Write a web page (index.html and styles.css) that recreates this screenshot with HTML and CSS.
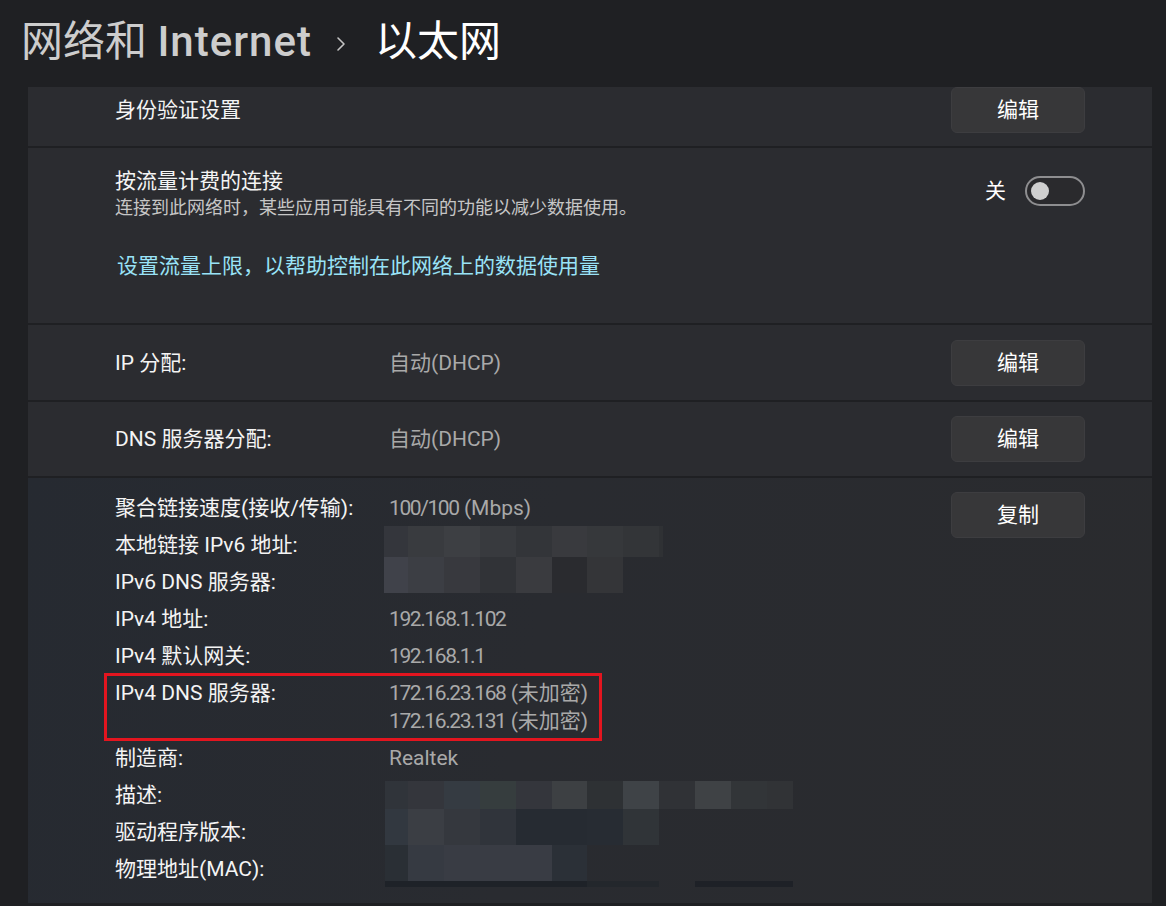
FILE: index.html
```html
<!DOCTYPE html>
<html lang="zh-CN">
<head>
<meta charset="utf-8">
<title>以太网</title>
<link rel="stylesheet" href="styles.css">
</head>
<body>
<header class="header">
  <span class="crumb">网络和 <b class="crumb-en">Internet</b></span>
  <svg class="chev" width="10" height="16" viewBox="0 0 10 16" aria-hidden="true"><polyline points="2,2 8,8 2,14" fill="none" stroke="#c4c4c4" stroke-width="1.6" stroke-linecap="round" stroke-linejoin="round"/></svg>
  <span class="current">以太网</span>
</header>
<main class="viewport">
  <div class="list">
    <section class="card row-auth">
      <div class="label grow">身份验证设置</div>
      <div class="btn">编辑</div>
    </section>

    <section class="card row-meter">
      <div class="meter-top">
        <div class="meter-text">
          <div class="meter-title">按流量计费的连接</div>
          <div class="meter-desc">连接到此网络时，某些应用可能具有不同的功能以减少数据使用。</div>
        </div>
        <div class="toggle-group">
          <span class="toggle-label">关</span>
          <span class="toggle"><span class="knob"></span></span>
        </div>
      </div>
      <div class="link">设置流量上限，以帮助控制在此网络上的数据使用量</div>
    </section>

    <section class="card row-ip">
      <div class="label">IP 分配:</div>
      <div class="value grow">自动(DHCP)</div>
      <div class="btn">编辑</div>
    </section>

    <section class="card row-dns">
      <div class="label">DNS 服务器分配:</div>
      <div class="value grow">自动(DHCP)</div>
      <div class="btn">编辑</div>
    </section>

    <section class="card row-props">
      <div class="props">
        <div class="label">聚合链接速度(接收/传输):</div><div class="value"><span class="num">100/100</span> (Mbps)</div>
        <div class="label">本地链接 IPv6 地址:</div><div class="value">&nbsp;</div>
        <div class="label">IPv6 DNS 服务器:</div><div class="value">&nbsp;</div>
        <div class="label">IPv4 地址:</div><div class="value"><span class="num">192.168.1.102</span></div>
        <div class="label">IPv4 默认网关:</div><div class="value"><span class="num">192.168.1.1</span></div>
        <div class="label">IPv4 DNS 服务器:</div><div class="value"><span class="num">172.16.23.168</span> (未加密)<br><span class="num">172.16.23.131</span> (未加密)</div>
        <div class="label">制造商:</div><div class="value">Realtek</div>
        <div class="label">描述:</div><div class="value">&nbsp;</div>
        <div class="label">驱动程序版本:</div><div class="value">&nbsp;</div>
        <div class="label">物理地址(MAC):</div><div class="value">&nbsp;</div>
      </div>
      <div class="btn">复制</div>

      <div class="mosaic mosaic-ipv6">
        <i class="c1"></i><i class="c2"></i><i class="c3"></i><i class="c4"></i><i class="c5"></i><i class="c6"></i><i class="c7"></i><i class="c8"></i><i class="c9"></i>
        <i class="c10"></i><i class="c11"></i><i class="c12"></i><i class="c13"></i><i class="c14"></i><i class="c15"></i><i class="c16"></i><i></i><i></i>
      </div>

      <div class="mosaic mosaic-hw">
        <i class="d1"></i><i class="d2"></i><i class="d3"></i><i class="d4"></i><i class="d2"></i><i class="d5"></i><i class="d6"></i><i class="d7"></i><i class="d8"></i><i class="d9"></i><i class="d10"></i><i class="d11"></i>
        <i class="d12"></i><i class="d13"></i><i class="d14"></i><i class="d15"></i><i class="d16"></i><i class="d16"></i><i class="d17"></i><i class="d18"></i><i></i><i></i><i></i><i></i>
        <i class="d19"></i><i class="d20"></i><i class="d21"></i><i class="d21"></i><i class="d21"></i><i class="d22"></i><i></i><i></i><i></i><i></i><i></i><i></i>
        <i class="d23"></i><i class="d23"></i><i class="d23"></i><i class="d23"></i><i class="d23"></i><i class="d23"></i><i class="d24"></i><i class="d24"></i><i></i><i class="d25"></i><i class="d25"></i><i class="d25"></i>
      </div>

      <div class="highlight"></div>
    </section>
  </div>
</main>
</body>
</html>
```

FILE: styles.css
```css
html, body {
  margin: 0;
  padding: 0;
}

body {
  width: 1166px;
  height: 906px;
  overflow: hidden;
  background: #1f2023;
  color: #ffffff;
  font-family: Roboto, "Noto Sans CJK SC", sans-serif;
}

.header {
  height: 87px;
  box-sizing: border-box;
  padding: 12px 0 0 21px;
  font-size: 42px;
  line-height: 60px;
  white-space: nowrap;
  display: flex;
  align-items: flex-start;
}

.crumb {
  color: #cdcdcd;
}

.crumb-en {
  font-weight: 500;
  letter-spacing: 1px;
}

.chev {
  display: block;
  height: 16px;
  margin: 24px 29px 0 24px;
}

.current {
  color: #ffffff;
}

.viewport {
  margin: 0 14px 0 28px;
  height: 816px;
  overflow: hidden;
}

.list {
  display: flex;
  flex-direction: column;
  gap: 2px;
  margin-top: -14px;
}

.card {
  background: #2b2c30;
  display: flex;
  align-items: center;
  padding: 0 67px 0 87px;
  font-size: 21px;
  line-height: 28px;
}

.grow {
  flex: 1;
}

.label {
  width: 274px;
  color: #f4f4f4;
}

.value {
  color: #a9a9a9;
}

.num {
  letter-spacing: -1.4px;
}

.btn {
  width: 134px;
  height: 46px;
  box-sizing: border-box;
  border-radius: 6px;
  background: #373739;
  border: 1px solid #3d3d40;
  color: #ffffff;
  font-size: 21px;
  display: flex;
  align-items: center;
  justify-content: center;
  flex-shrink: 0;
}

.row-auth {
  height: 73px;
}

.row-ip {
  height: 75px;
}

.row-dns {
  height: 74px;
}

/* metered connection */
.row-meter {
  flex-direction: column;
  align-items: stretch;
  padding-top: 19px;
  padding-bottom: 43px;
}

.meter-top {
  display: flex;
  justify-content: space-between;
  align-items: flex-start;
}

.meter-title {
  color: #f4f4f4;
}

.meter-desc {
  font-size: 18px;
  line-height: 26px;
  color: #c6c6c6;
}

.toggle-group {
  display: flex;
  align-items: center;
  margin-top: 9px;
}

.toggle-label {
  margin-right: 19px;
}

.toggle {
  width: 60px;
  height: 30px;
  box-sizing: border-box;
  border: 2px solid #8e8e90;
  border-radius: 15px;
  background: #2a2a2d;
  display: flex;
  align-items: center;
  padding-left: 4px;
}

.knob {
  width: 18px;
  height: 18px;
  border-radius: 50%;
  background: #cfcfcf;
}

.link {
  margin-top: 31px;
  padding-left: 2px;
  color: #99e3f7;
}

/* properties */
.row-props {
  position: relative;
  align-items: flex-start;
  padding-top: 14px;
  height: 425px;
  box-sizing: border-box;
  background: linear-gradient(100deg, #262a31 0%, #292b30 45%, #2a2b2e 100%);
}

.props {
  flex: 1;
  padding-top: 2px;
  display: grid;
  grid-template-columns: 274px 1fr;
  row-gap: 9px;
}

.props .label {
  width: auto;
}

.highlight {
  position: absolute;
  left: 76px;
  top: 195px;
  width: 498px;
  height: 68px;
  box-sizing: border-box;
  border: 3px solid #e3151f;
}

/* redaction mosaics */
.mosaic {
  position: absolute;
  display: grid;
}

.mosaic i {
  display: block;
}

.mosaic-ipv6 {
  left: 356px;
  top: 48px;
  grid-template-columns: 24px 36px 36px 36px 36px 35px 36px 36px 4px;
  grid-template-rows: 31px 36px;
}

.mosaic-hw {
  left: 357px;
  top: 303px;
  grid-template-columns: 23px 36px 36px 36px 36px 35px 36px 36px 36px 36px 36px 26px;
  grid-template-rows: 28px 36px 36px 6px;
}

.c1 { background: #34363c; }
.c2 { background: #393b3f; }
.c3 { background: #3d3f43; }
.c4 { background: #383a3e; }
.c5 { background: #333539; }
.c6 { background: #393a3e; }
.c7 { background: #36383b; }
.c8 { background: #333538; }
.c9 { background: #2f3134; }
.c10 { background: #40424a; }
.c11 { background: #3c3e44; }
.c12 { background: #38393e; }
.c13 { background: #313337; }
.c14 { background: #3a3b3f; }
.c15 { background: #2a2b2f; }
.c16 { background: #343538; }

.d1 { background: #30343a; }
.d2 { background: #34363c; }
.d3 { background: #353b42; }
.d4 { background: #363d3e; }
.d5 { background: #3d4043; }
.d6 { background: #2e3134; }
.d7 { background: #3f4347; }
.d8 { background: #303236; }
.d9 { background: #3f4245; }
.d10 { background: #323538; }
.d11 { background: #313336; }
.d12 { background: #323840; }
.d13 { background: #3b3e44; }
.d14 { background: #35383e; }
.d15 { background: #30343b; }
.d16 { background: #262b32; }
.d17 { background: #272c33; }
.d18 { background: #303438; }
.d19 { background: #2a2f35; }
.d20 { background: #363a42; }
.d21 { background: #393c44; }
.d22 { background: #2b3037; }
.d23 { background: #1e2228; }
.d24 { background: #23272c; }
.d25 { background: #1e2127; }
```
